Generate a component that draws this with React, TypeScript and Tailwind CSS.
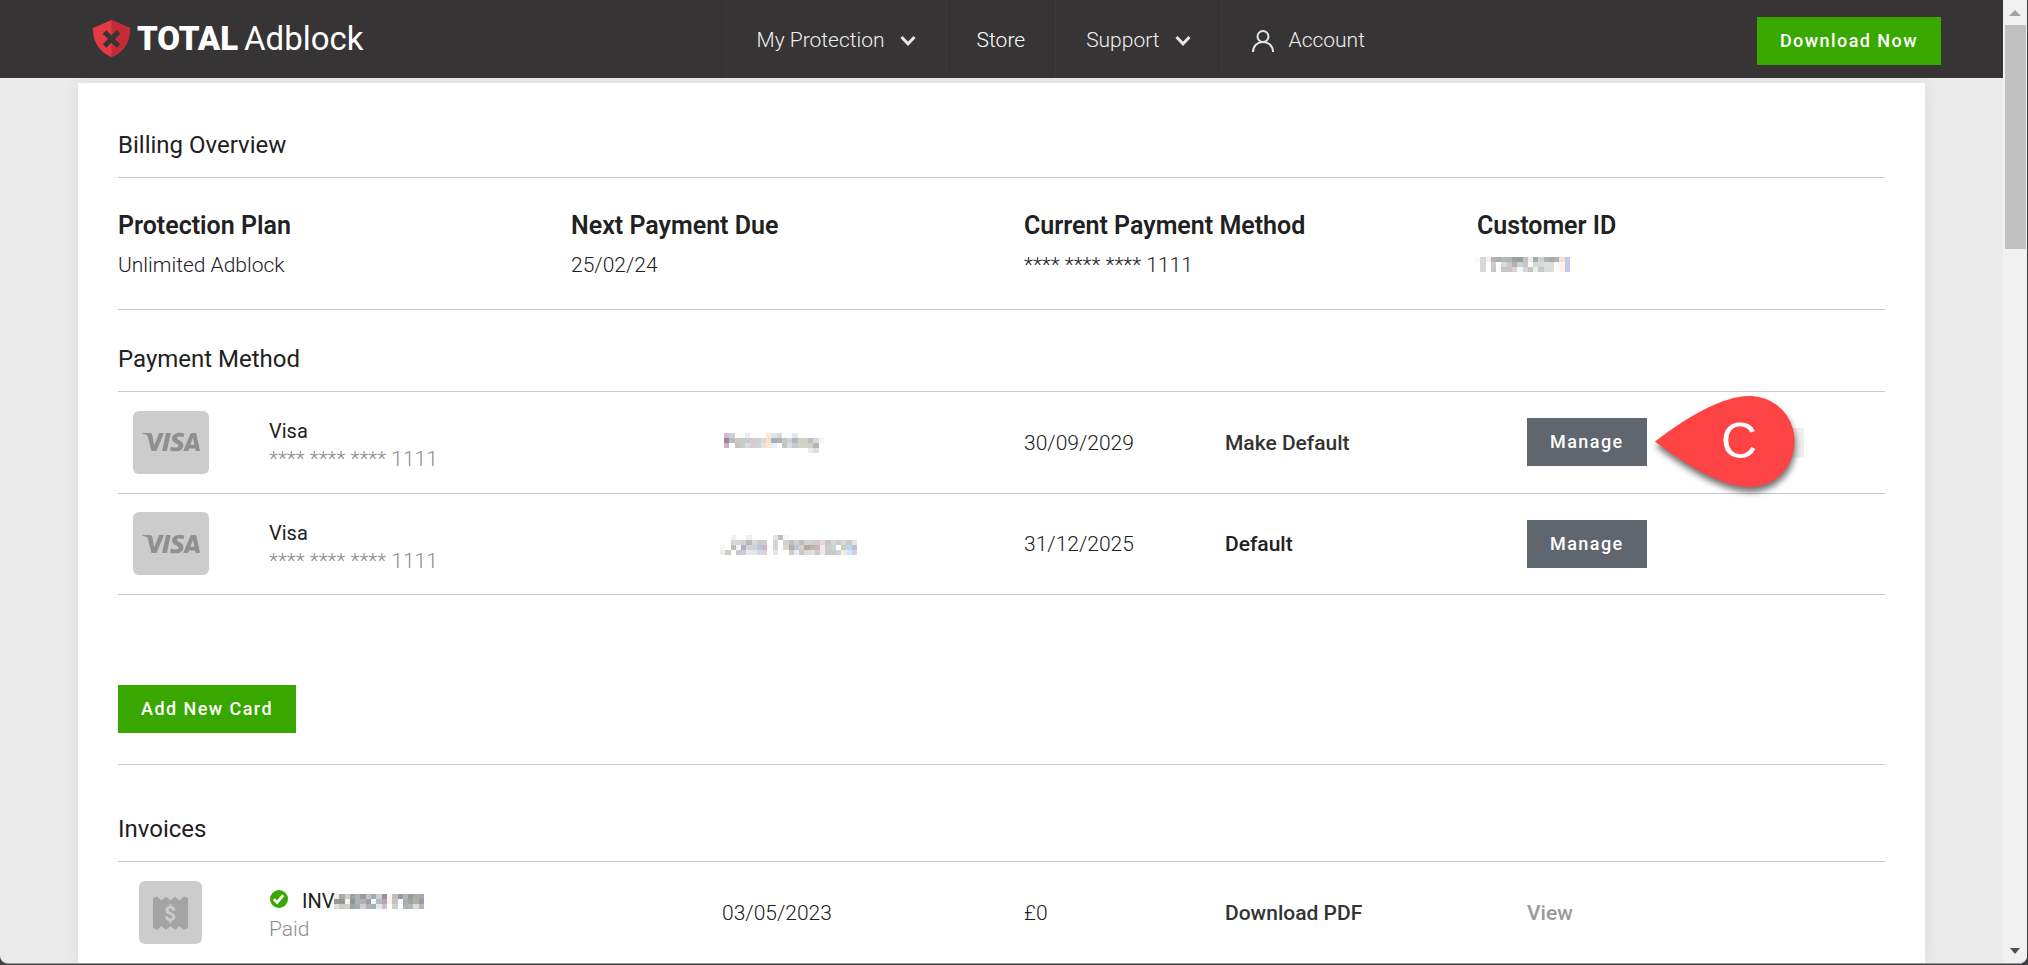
import type { ReactNode } from "react";
import { SiVisa } from "react-icons/si";

// Each row is a list of cell colours; "-" leaves the cell empty.
const CUSTOMER_ID = [
  "f9f9f9 d5d8d6 f5efec b4b2b4 a9aeaf b9b8b6 b1b6b8 a0a09e 9b9ea0 c3c6c0 e5ecef a3a9ac cfd3cc b0b4b3 a8acac b3b3b5 ebe4d6 c5c7e6",
  "- d5d9d5 - cdcbd0 - d5dcdc c9c9c9 b3b3b3 c9d2d4 c9c4cc fdfbf0 d6d8d6 d3dde1 d8e0e2 e0ddd3 f3fbfd fff5e6 c5c7e6",
  "- d5d9d5 - cbc4d0 - c3c5c1 c5c7c6 e7cdc9 edfbfb dbd2d8 c3c6be e9ece9 c6c8c5 d6dee1 e0dcd2 - fff2e4 c5c7e6",
];

const FIRST_HOLDER = [
  "cfbccb cfd0d6 - - e8eff0 - - - fde9d8 e0e8ee d8d9da - - e2e8eb - - - - -",
  "a08395 b5bac9 cdc9c6 cacaca c6cecd d9cace ced2d2 dcdad9 fce0c4 a6adb5 aeb1b5 c8c4c0 d0d3d5 b1b7bc d3cfc9 d3cfc6 b8bfc3 ded9d4 eef5fc",
  "ccb3cb - c7c4c0 cbcbca d3dfe1 dccdd1 d1d4d6 e6e1dc fde6cb e4f1fb - c6c3c1 d9dcdf c5c8ca d4d2cd d5d2cb d3cec6 aeb5be -",
  "- - - - - - - - - - - - - - - - eeebe4 dee0df -",
];

const SECOND_HOLDER = [
  "- - eff1f2 - - eceff1 - - - - e8e2df babcbf f1f9fc - - - - - - - - - - - - -",
  "- - d0dade d7d7d8 d0cfd2 beb4bb d8d8dc c9cbce cccfd0 - dcd2d4 - cfd1ce bec0c1 cfd0ce b9bdc7 d7d2d1 cdcfcf d9c3cf e4dcda c3c7c8 d8d7d7 c6cfd0 d9d9d9 c4cdd1 dfe7ea",
  "f6f6f6 - bdbfae edf6f9 bda9cb d6d4de cdd3da b5c9dd ccb2ca f5fbff dbd1d2 - e3d4c1 abb0b4 b9c8d6 cfd2cf b1a99f b4b4b1 d2b0bd efe9e8 cbcccb c3d4d5 - d1c8b6 b6d9ee bdbdd0",
  "ededea cbcbcb - c7c7c7 c9ccce e6e8ea e2e4e8 d4dbe6 e3cdd9 - eae3e3 - - c9cac9 e9eaf2 c7c9ca dcdcda e1e0de c8cacd f1e8e9 c9cac9 c8c9c8 d2d2d0 f0ede2 d0e6fa d8cce3",
];

const INVOICE_NUMBER = [
  "efebe7 a6aaab d0ccc9 9aa1a7 b0b3b0 999b9d c2c4c3 a5a8ac c9cfdb 9b8d99 fbf3f1 bfc0bd 9499a5 aeb3b7 999b9b aeaaa4 a0a6ae",
  "999896 949696 f9f5ee 8e9899 acb4ba b8b0a8 9a9cb5 f0fbfc b5b9c8 b9a4b3 fff1ee c9c2be f7faff abaeb0 9aa4a3 b2aba1 999da1",
  "e0dfde ccc8c3 d2d2cb a0a4a1 a9a9aa c9cdd8 b1b0b0 a9adab e1e8ef cec1cd - cdd3d3 - b2b0a9 b0b6bb dcdbd4 b5b7bf",
];

const Redacted = ({ cells, className }: { cells: string[]; className: string }) => {
  const rows = cells.map((row) => row.split(" "));

  return (
    <svg
      viewBox={`0 0 ${rows[0].length} ${rows.length}`}
      preserveAspectRatio="none"
      shapeRendering="crispEdges"
      className={className}
      role="img"
      aria-label="Hidden"
    >
      {rows.map((row, y) =>
        row.map((cell, x) =>
          cell === "-" ? null : (
            <rect key={`${x}-${y}`} x={x} y={y} width="1" height="1" fill={`#${cell}`} />
          )
        )
      )}
    </svg>
  );
};

const Chevron = () => (
  <svg viewBox="0 0 16 12" className="h-3 w-4" fill="none" aria-hidden="true">
    <path d="M1.500 2 8 8.800 14.500 2" stroke="#e6e6e6" strokeWidth="3" />
  </svg>
);

const Logo = () => (
  <a href="#" className="flex items-center text-white">
    <svg viewBox="0 0 37 37" className="mb-0.5 h-[37px] w-[37px]" aria-hidden="true">
      <path d="M18.500 0 37 8C37.500 22 30 33 18.500 37 7 33-.5 22 0 8Z" fill="#e63946" />
      <path d="M18.500 0 37 8C37.500 22 30 33 18.500 37Z" fill="#c32b36" />
      <path d="m11.500 12 14 14m0-14-14 14" stroke="#373435" strokeWidth="5" />
    </svg>
    <span className="ml-[7px] text-[33px] leading-10 font-black">TOTAL</span>
    <span className="ml-[6px] text-[33px] leading-10">Adblock</span>
  </a>
);

const NavItem = ({ children }: { children: ReactNode }) => (
  <a
    href="#"
    className="flex h-full items-center gap-[15px] border-l border-[#3c393a] px-[30px] pt-[3px] text-[21px] font-light text-[#f0f0f0]"
  >
    {children}
  </a>
);

const Navbar = () => (
  <header className="flex h-[78px] shrink-0 items-center justify-between bg-[#373435] pr-[62px] pl-[93px]">
    <Logo />
    <nav className="flex h-full items-center">
      <NavItem>
        My Protection <Chevron />
      </NavItem>
      <NavItem>
        <span className="text-white">Store</span>
      </NavItem>
      <NavItem>
        Support <Chevron />
      </NavItem>
      <NavItem>
        <svg viewBox="0 0 22 22" className="h-[22px] w-[22px]" fill="none" aria-hidden="true">
          <circle cx="11" cy="6.500" r="5.500" stroke="#e6e6e6" strokeWidth="2" />
          <path d="M1 22C1 8.500 21 8.500 21 22" stroke="#e6e6e6" strokeWidth="2" />
        </svg>
        Account
      </NavItem>
    </nav>
    <button className="mt-1 h-12 bg-[#38a700] px-[23px] text-lg font-medium tracking-[0.08em] text-white">
      Download Now
    </button>
  </header>
);

const SectionTitle = ({ children }: { children: ReactNode }) => (
  <h2 className="border-b border-[#c8c8c8] pb-[10px] text-2xl leading-[44px]">{children}</h2>
);

const OverviewItem = ({ label, children }: { label: string; children: ReactNode }) => (
  <div>
    <h3 className="text-[25px] leading-10 font-semibold">{label}</h3>
    <div className="flex h-10 items-center text-[21px] font-light">{children}</div>
  </div>
);

const Columns = () => (
  <colgroup>
    <col className="w-[151px]" />
    <col className="w-[453px]" />
    <col className="w-[302px]" />
    <col className="w-[201px]" />
    <col className="w-[302px]" />
    <col className="w-[358px]" />
  </colgroup>
);

const Callout = () => (
  <div className="absolute top-[3px] left-[125px] h-[91px] w-[152px]">
    <div className="absolute top-8 right-0 h-[30px] w-5 bg-[#efefef]" />
    <svg
      viewBox="0 0 140 91"
      className="absolute top-0 left-[3px] h-[91px] w-[140px] overflow-visible drop-shadow-[1px_5px_3px_rgba(0,0,0,0.55)]"
      aria-hidden="true"
    >
      <path
        d="M0 45.500C32 21 68 0 94 0 120 0 139.500 20 139.500 45.500S120 91 94 91C68 91 32 70 0 45.500Z"
        fill="#fd4343"
      />
    </svg>
    <span className="absolute top-0 left-[57px] w-[60px] text-center font-['Liberation_Sans'] text-[50px] leading-[91px] text-white">
      C
    </span>
  </div>
);

const PaymentRow = ({
  holder,
  expires,
  action,
  pointer,
}: {
  holder: ReactNode;
  expires: string;
  action: ReactNode;
  pointer?: boolean;
}) => (
  <tr className="h-[101px] border-b border-[#c8c8c8]">
    <td>
      <div className="ml-[15px] flex h-[63px] w-[76px] items-center justify-center rounded-md bg-[#cccccc]">
        <SiVisa className="size-[58px] text-[#909090]" />
      </div>
    </td>
    <td className="pt-[6px]">
      <div className="text-xl leading-7">Visa</div>
      <div className="text-[21px] leading-7 font-light text-[#8c8c8c]">**** **** **** 1111</div>
    </td>
    <td className="pt-0.5">{holder}</td>
    <td className="pt-0.5 font-light">{expires}</td>
    <td className="pt-0.5 font-medium">{action}</td>
    <td>
      <div className="relative">
        <button className="block h-12 bg-[#5f666d] px-[23px] text-lg font-medium tracking-[0.08em] text-white">
          Manage
        </button>
        {pointer && (
          <div className="absolute -top-[25px] left-0">
            <Callout />
          </div>
        )}
      </div>
    </td>
  </tr>
);

const ReceiptIcon = () => (
  <svg viewBox="0 0 63 63" className="ml-[21px] h-[63px] w-[63px]" aria-hidden="true">
    <rect width="63" height="63" rx="6" fill="#cccccc" />
    <path
      d="M14 17 18 15.500 22.500 19.500 27 15.500 31.500 19.500 36 15.500 40.500 19.500 45 15.500 49 17V47L45 49 40.500 45 36 49 31.500 45 27 49 22.500 45 18 49 14 47Z"
      fill="#a3a5a4"
    />
    <text x="31" y="40" textAnchor="middle" fontSize="21" fontWeight="700" fill="#cccccc">
      $
    </text>
  </svg>
);

const PaidIcon = () => (
  <svg viewBox="0 0 18 18" className="mb-1 ml-px h-[18px] w-[18px]" aria-hidden="true">
    <circle cx="9" cy="9" r="9" fill="#38a700" />
    <path d="m3.800 9.300 3.400 3.200 6-7.300" fill="none" stroke="#fff" strokeWidth="2.800" />
  </svg>
);

const Scrollbar = () => (
  <div className="flex w-6 shrink-0 flex-col items-center bg-[#f1f1f1]" aria-hidden="true">
    <svg viewBox="0 0 12 25" className="h-[25px] w-3">
      <path d="M0 16 6 10 12 16Z" fill="#a3a3a3" />
    </svg>
    <div className="h-56 w-[21px] bg-[#c1c1c1]" />
    <svg viewBox="0 0 12 25" className="mt-auto h-[25px] w-3">
      <path d="M1 10 6 16 11 10Z" fill="#505050" />
    </svg>
  </div>
);

export default function App() {
  return (
    <div className="h-screen overflow-hidden bg-[#3f3f41] pr-px pb-px font-[Roboto,sans-serif] text-[#212121]">
      <div className="flex h-full overflow-hidden rounded-b-lg border-b border-[#9a9a9a] bg-[#ebebeb]">
        <div className="flex min-w-0 flex-1 flex-col overflow-hidden">
          <Navbar />
          <main className="mx-[78px] mt-[5px] bg-white px-10 pt-10 shadow-[0_0_16px_rgba(0,0,0,0.08)]">
            <section>
              <SectionTitle>Billing Overview</SectionTitle>
              <div className="grid grid-cols-4 gap-x-[45px] border-b border-[#c8c8c8] pt-7 pb-[23px]">
                <OverviewItem label="Protection Plan">Unlimited Adblock</OverviewItem>
                <OverviewItem label="Next Payment Due">25/02/24</OverviewItem>
                <OverviewItem label="Current Payment Method">**** **** **** 1111</OverviewItem>
                <OverviewItem label="Customer ID">
                  <Redacted cells={CUSTOMER_ID} className="mb-1 -ml-0.5 h-[15px] w-[95px]" />
                </OverviewItem>
              </div>
            </section>

            <section className="border-b border-[#c8c8c8] pt-[27px] pb-[31px]">
              <SectionTitle>Payment Method</SectionTitle>
              <table className="w-full table-fixed text-left text-[21px]">
                <Columns />
                <tbody>
                  <PaymentRow
                    holder={<Redacted cells={FIRST_HOLDER} className="ml-0.5 h-5 w-[100px]" />}
                    expires="30/09/2029"
                    action={
                      <a href="#" className="text-[#333333]">
                        Make Default
                      </a>
                    }
                    pointer
                  />
                  <PaymentRow
                    holder={<Redacted cells={SECOND_HOLDER} className="-ml-0.5 h-5 w-[137px]" />}
                    expires="31/12/2025"
                    action="Default"
                  />
                </tbody>
              </table>
              <button className="mt-[90px] block h-12 bg-[#38a700] px-[23px] text-lg font-medium tracking-[0.08em] text-white">
                Add New Card
              </button>
            </section>

            <section className="pt-[42px]">
              <SectionTitle>Invoices</SectionTitle>
              <table className="w-full table-fixed text-left text-[21px]">
                <Columns />
                <tbody>
                  <tr className="h-[102px] border-b border-[#c8c8c8]">
                    <td>
                      <ReceiptIcon />
                    </td>
                    <td className="pt-[6px]">
                      <div className="flex items-center text-xl leading-7">
                        <PaidIcon />
                        <span className="ml-[14px]">INV</span>
                        <Redacted cells={INVOICE_NUMBER} className="h-[15px] w-[90px]" />
                      </div>
                      <div className="leading-7 font-light text-[#8c8c8c]">Paid</div>
                    </td>
                    <td className="pt-0.5 font-light">03/05/2023</td>
                    <td className="pt-0.5 font-light">£0</td>
                    <td className="pt-0.5 font-medium">
                      <a href="#" className="text-[#333333]">
                        Download PDF
                      </a>
                    </td>
                    <td className="pt-0.5 font-medium">
                      <a href="#" className="text-[#999999]">
                        View
                      </a>
                    </td>
                  </tr>
                </tbody>
              </table>
            </section>
          </main>
        </div>
        <Scrollbar />
      </div>
    </div>
  );
}
